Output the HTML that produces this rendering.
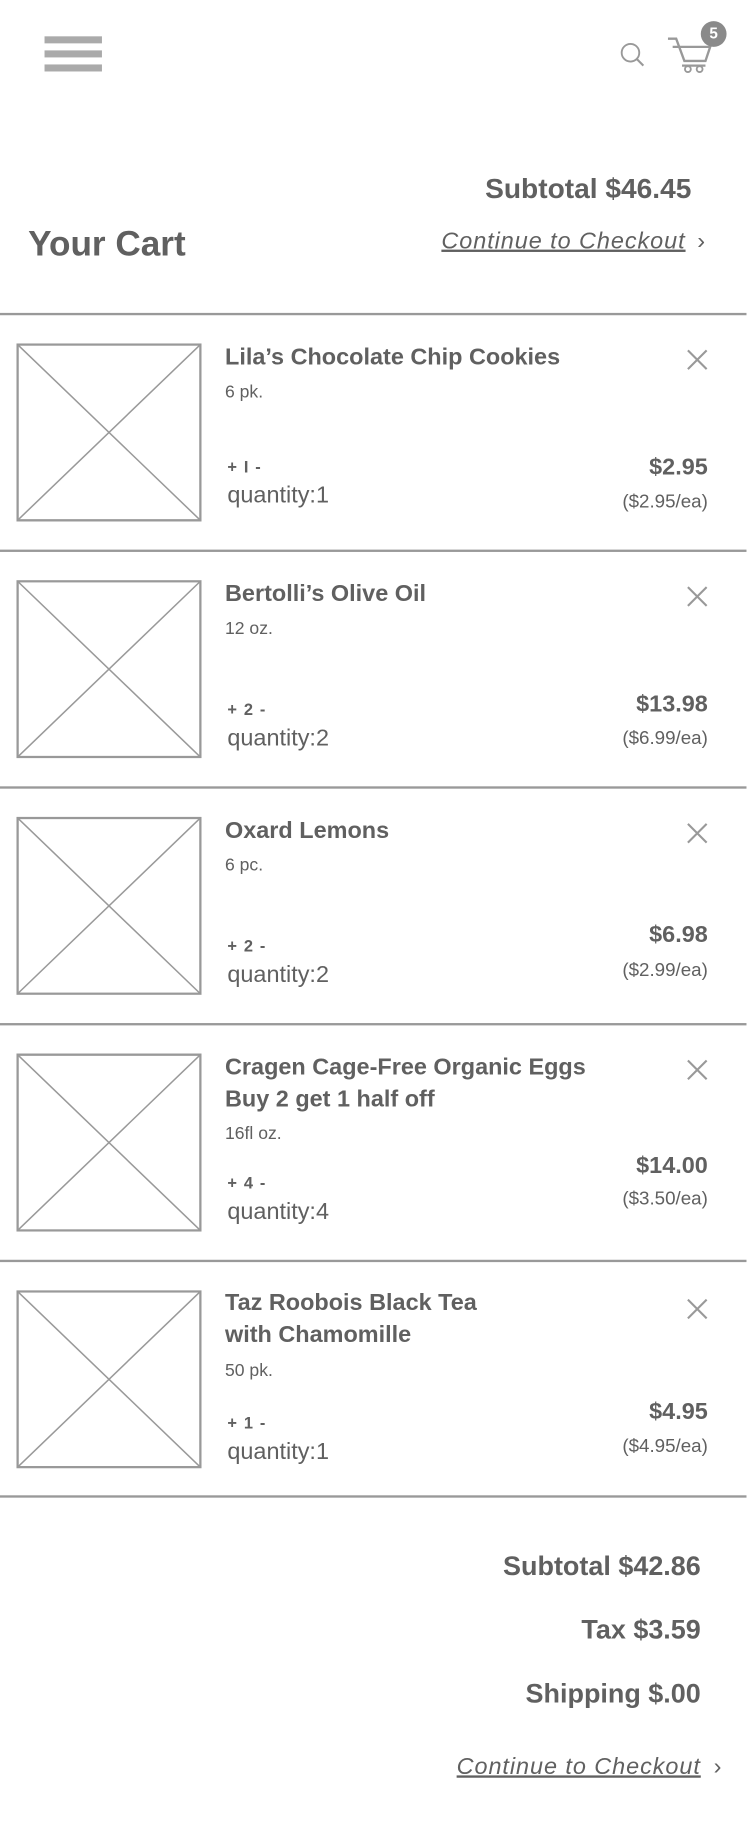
<!DOCTYPE html>
<html><head><meta charset="utf-8">
<style>
html,body{margin:0;padding:0;background:#fff;}
body{width:750px;height:1832px;overflow:hidden;position:relative;}
#w{position:absolute;left:0;top:0;width:640px;height:1564px;transform:scale(1.171875);transform-origin:0 0;font-family:"Liberation Sans",sans-serif;color:#606060;}
.a{position:absolute;white-space:nowrap;}
.bar{position:absolute;left:38px;width:49px;height:6px;background:#aaa;}
.line{position:absolute;left:0;width:637px;height:2px;background:#999;}
.img{position:absolute;left:14px;width:158px;height:152px;}
.t{font-weight:bold;font-size:20px;left:192px;line-height:27px;}
.s{font-size:15px;left:192px;}
.pm{font-size:14px;font-weight:bold;left:194px;letter-spacing:1px;}
.q{font-size:20px;left:194px;}
.p{font-size:20px;font-weight:bold;right:36px;}
.e{font-size:16px;right:36px;}
.x{position:absolute;left:585px;width:20px;height:20px;}
.tot{font-size:23px;font-weight:bold;right:42px;}
.co{font-size:20px;font-style:italic;text-decoration:underline;letter-spacing:0.8px;}
</style></head><body><div id="w">
<div class="bar" style="top:31px"></div><div class="bar" style="top:43px"></div><div class="bar" style="top:55px"></div>
<svg class="a" style="left:528px;top:35px" width="24" height="24" viewBox="0 0 24 24"><circle cx="10" cy="10" r="7.5" fill="none" stroke="#999" stroke-width="1.6"/><line x1="15.5" y1="15.5" x2="21" y2="21" stroke="#999" stroke-width="1.8"/></svg>
<svg class="a" style="left:568px;top:28px" width="50" height="36" viewBox="0 0 50 36"><path d="M2 5 L9 5 L16 24 L34 24 L38 12 L6 12" fill="none" stroke="#999" stroke-width="2"/><line x1="14" y1="28" x2="34" y2="28" stroke="#999" stroke-width="2"/><circle cx="19" cy="31" r="2.5" fill="none" stroke="#999" stroke-width="1.6"/><circle cx="29" cy="31" r="2.5" fill="none" stroke="#999" stroke-width="1.6"/></svg>
<div class="a" style="left:598px;top:18px;width:22px;height:22px;border-radius:50%;background:#8a8a8a;color:#fff;font-size:13px;font-weight:bold;text-align:center;line-height:22px;">5</div>

<div class="a tot" style="right:50px;top:148px;font-size:24px">Subtotal $46.45</div>
<div class="a" style="left:24px;top:192px;font-size:30px;font-weight:bold">Your Cart</div>
<div class="a co" style="right:55px;top:195px">Continue to Checkout</div>
<div class="a" style="left:595px;top:195px;font-size:20px">›</div>

<div class="line" style="top:267px"></div>
<svg class="img" style="top:293px" viewBox="0 0 158 152"><rect x="1" y="1" width="156" height="150" fill="none" stroke="#999" stroke-width="2"/><line x1="1" y1="1" x2="157" y2="151" stroke="#999" stroke-width="1.3"/><line x1="157" y1="1" x2="1" y2="151" stroke="#999" stroke-width="1.3"/></svg>
<svg class="x" style="top:297px" viewBox="0 0 20 20"><path d="M2 2L18 18M18 2L2 18" stroke="#999" stroke-width="1.8"/></svg>
<div class="a t" style="top:292px">Lila’s Chocolate Chip Cookies</div>
<div class="a s" style="top:326px">6 pk.</div>
<div class="a pm" style="top:390px">+ I -</div>
<div class="a q" style="top:412px">quantity:1</div>
<div class="a p" style="top:388px">$2.95</div>
<div class="a e" style="top:420px">($2.95/ea)</div>

<div class="line" style="top:469px"></div>
<svg class="img" style="top:495px" viewBox="0 0 158 152"><rect x="1" y="1" width="156" height="150" fill="none" stroke="#999" stroke-width="2"/><line x1="1" y1="1" x2="157" y2="151" stroke="#999" stroke-width="1.3"/><line x1="157" y1="1" x2="1" y2="151" stroke="#999" stroke-width="1.3"/></svg>
<svg class="x" style="top:499px" viewBox="0 0 20 20"><path d="M2 2L18 18M18 2L2 18" stroke="#999" stroke-width="1.8"/></svg>
<div class="a t" style="top:494px">Bertolli’s Olive Oil</div>
<div class="a s" style="top:528px">12 oz.</div>
<div class="a pm" style="top:597px">+ 2 -</div>
<div class="a q" style="top:619px">quantity:2</div>
<div class="a p" style="top:590px">$13.98</div>
<div class="a e" style="top:622px">($6.99/ea)</div>

<div class="line" style="top:671px"></div>
<svg class="img" style="top:697px" viewBox="0 0 158 152"><rect x="1" y="1" width="156" height="150" fill="none" stroke="#999" stroke-width="2"/><line x1="1" y1="1" x2="157" y2="151" stroke="#999" stroke-width="1.3"/><line x1="157" y1="1" x2="1" y2="151" stroke="#999" stroke-width="1.3"/></svg>
<svg class="x" style="top:701px" viewBox="0 0 20 20"><path d="M2 2L18 18M18 2L2 18" stroke="#999" stroke-width="1.8"/></svg>
<div class="a t" style="top:696px">Oxard Lemons</div>
<div class="a s" style="top:730px">6 pc.</div>
<div class="a pm" style="top:799px">+ 2 -</div>
<div class="a q" style="top:821px">quantity:2</div>
<div class="a p" style="top:787px">$6.98</div>
<div class="a e" style="top:820px">($2.99/ea)</div>

<div class="line" style="top:873px"></div>
<svg class="img" style="top:899px" viewBox="0 0 158 152"><rect x="1" y="1" width="156" height="150" fill="none" stroke="#999" stroke-width="2"/><line x1="1" y1="1" x2="157" y2="151" stroke="#999" stroke-width="1.3"/><line x1="157" y1="1" x2="1" y2="151" stroke="#999" stroke-width="1.3"/></svg>
<svg class="x" style="top:903px" viewBox="0 0 20 20"><path d="M2 2L18 18M18 2L2 18" stroke="#999" stroke-width="1.8"/></svg>
<div class="a t" style="top:898px">Cragen Cage-Free Organic Eggs<br>Buy 2 get 1 half off</div>
<div class="a s" style="top:959px">16fl oz.</div>
<div class="a pm" style="top:1001px">+ 4 -</div>
<div class="a q" style="top:1023px">quantity:4</div>
<div class="a p" style="top:984px">$14.00</div>
<div class="a e" style="top:1015px">($3.50/ea)</div>

<div class="line" style="top:1075px"></div>
<svg class="img" style="top:1101px" viewBox="0 0 158 152"><rect x="1" y="1" width="156" height="150" fill="none" stroke="#999" stroke-width="2"/><line x1="1" y1="1" x2="157" y2="151" stroke="#999" stroke-width="1.3"/><line x1="157" y1="1" x2="1" y2="151" stroke="#999" stroke-width="1.3"/></svg>
<svg class="x" style="top:1107px" viewBox="0 0 20 20"><path d="M2 2L18 18M18 2L2 18" stroke="#999" stroke-width="1.8"/></svg>
<div class="a t" style="top:1099px">Taz Roobois Black Tea<br>with Chamomille</div>
<div class="a s" style="top:1161px">50 pk.</div>
<div class="a pm" style="top:1206px">+ 1 -</div>
<div class="a q" style="top:1228px">quantity:1</div>
<div class="a p" style="top:1194px">$4.95</div>
<div class="a e" style="top:1226px">($4.95/ea)</div>

<div class="line" style="top:1276px"></div>

<div class="a tot" style="top:1323px">Subtotal $42.86</div>
<div class="a tot" style="top:1377px">Tax $3.59</div>
<div class="a tot" style="top:1432px">Shipping $.00</div>
<div class="a co" style="right:42px;top:1497px">Continue to Checkout</div>
<div class="a" style="left:609px;top:1497px;font-size:20px">›</div>
</div></body></html>
